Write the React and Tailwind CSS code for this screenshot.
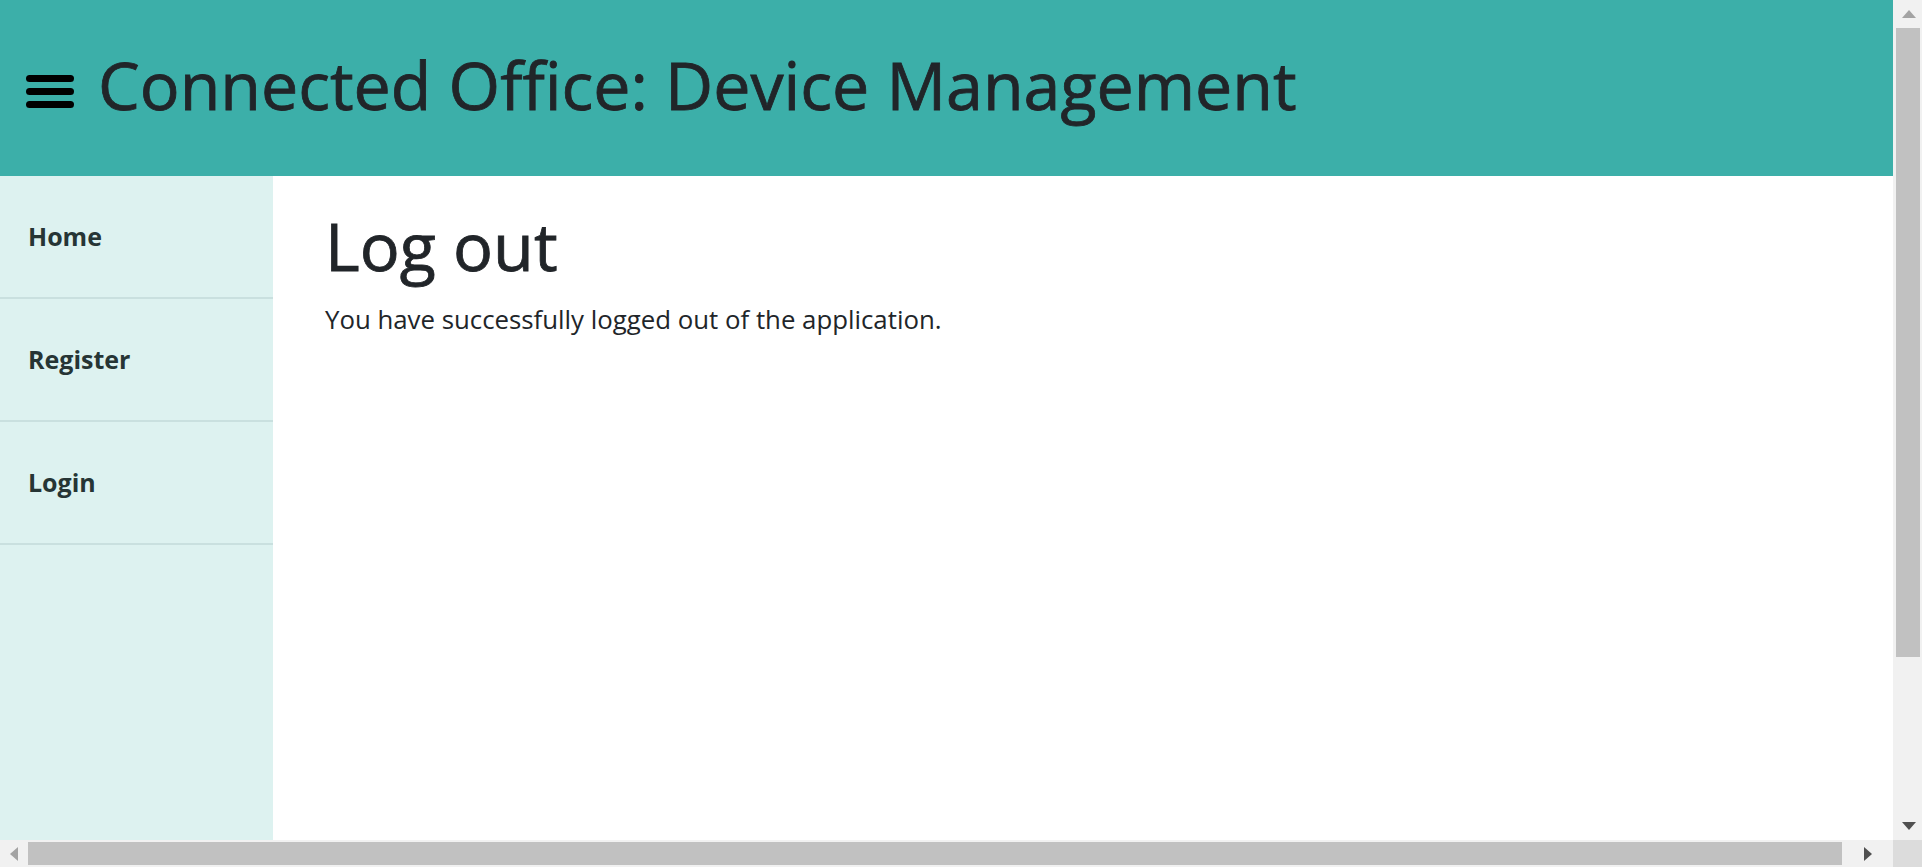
import React from "react";

function Hamburger() {
  return (
    <svg width="48" height="34" viewBox="0 0 48 34" className="shrink-0 mt-[8px]">
      <line x1="3.5" y1="3.5" x2="44.5" y2="3.5" stroke="#000" strokeWidth="7" strokeLinecap="round" />
      <line x1="3.5" y1="16.5" x2="44.5" y2="16.5" stroke="#000" strokeWidth="7" strokeLinecap="round" />
      <line x1="3.5" y1="29.5" x2="44.5" y2="29.5" stroke="#000" strokeWidth="7" strokeLinecap="round" />
    </svg>
  );
}

function Arrow({ dir, color }) {
  const pts = {
    up: "0,8 7,0 14,8",
    down: "0,0 14,0 7,8",
    left: "8,0 8,14 0,7",
    right: "0,0 0,14 8,7",
  }[dir];
  const w = dir === "up" || dir === "down" ? 14 : 8;
  const h = dir === "up" || dir === "down" ? 8 : 14;
  return (
    <svg width={w} height={h} viewBox={`0 0 ${w} ${h}`}>
      <polygon points={pts} fill={color} />
    </svg>
  );
}

const navItems = ["Home", "Register", "Login"];

export default function App() {
  return (
    <div
      className="h-screen w-full flex flex-col overflow-hidden bg-white"
      style={{ fontFamily: '"Open Sans", "Noto Sans", sans-serif' }}
    >
      <div className="flex flex-1 min-h-0">
        <div className="flex-1 min-w-0 flex flex-col">
          <header className="h-[176px] shrink-0 bg-[#3cafa9] flex items-center pl-[26px] gap-[24px]">
            <Hamburger />
            <h1 className="text-[66.3px] leading-none font-medium text-[#212529] whitespace-nowrap pb-[8px] [-webkit-text-stroke:0.8px_#212529]">
              Connected Office: Device Management
            </h1>
          </header>
          <div className="flex flex-1 min-h-0">
            <nav className="w-[273px] shrink-0 bg-[#ddf2f0] flex flex-col">
              {navItems.map((item) => (
                <div
                  key={item}
                  className="h-[123px] shrink-0 flex items-center pl-[28px] border-b-2 border-[#c9e0df] text-[25px] font-bold text-[#263535]"
                >
                  {item}
                </div>
              ))}
            </nav>
            <main className="flex-1 min-w-0 pl-[52px] pt-[30px]">
              <h2 className="text-[66.5px] leading-[1.2] font-medium text-[#212529] [-webkit-text-stroke:0.8px_#212529]">
                Log out
              </h2>
              <p className="text-[25.8px] leading-[1.5] text-[#212529] mt-[14px]">
                You have successfully logged out of the application.
              </p>
            </main>
          </div>
        </div>
        <div className="w-[29px] shrink-0 bg-[#f1f1f1] flex flex-col">
          <div className="h-[28px] shrink-0 flex items-center justify-center pl-[2px]">
            <Arrow dir="up" color="#a3a3a3" />
          </div>
          <div className="h-[629px] shrink-0 ml-[3px] mr-[2px] bg-[#c1c1c1]" />
          <div className="flex-1" />
          <div className="h-[28px] shrink-0 flex items-center justify-center pl-[2px]">
            <Arrow dir="down" color="#505050" />
          </div>
        </div>
      </div>
      <div className="h-[27px] shrink-0 flex bg-[#f1f1f1]">
        <div className="w-[28px] shrink-0 flex items-center justify-center">
          <Arrow dir="left" color="#a3a3a3" />
        </div>
        <div className="w-[1814px] shrink-0 my-[2px] bg-[#c1c1c1]" />
        <div className="flex-1 flex items-center justify-center">
          <Arrow dir="right" color="#505050" />
        </div>
        <div className="w-[29px] shrink-0 bg-[#dcdcdc]" />
      </div>
    </div>
  );
}
